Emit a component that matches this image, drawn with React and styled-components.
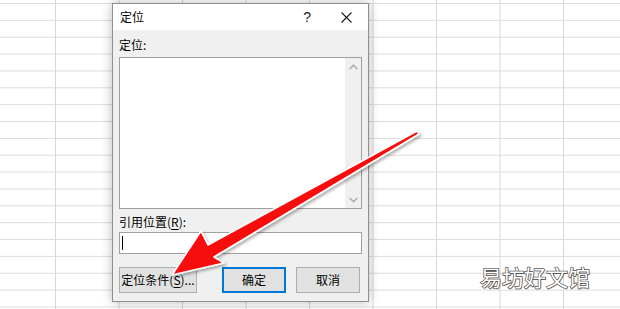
// Imports
import React from "react";
import styled, { createGlobalStyle } from "styled-components";

// Global
const GlobalStyle = createGlobalStyle`
	html, body{
		margin: 0;
		padding: 0;
		background: #ffffff;
	}
	body{
		font-family: "Noto Sans CJK SC", "Noto Sans", sans-serif;
	}
`;

// Icons
const CloseIcon = () => (
	<svg width="11" height="11" viewBox="0 0 11 11">
		<path d="M0.5 0.5 L10.5 10.5 M10.5 0.5 L0.5 10.5" stroke="#1a1a1a" strokeWidth="1.1" fill="none" />
	</svg>
);

const Chevron = ({ down }) => (
	<svg width="9" height="6" viewBox="0 0 9 6">
		<path d={ down ? "M0.8 1 L4.5 4.8 L8.2 1" : "M0.8 5 L4.5 1.2 L8.2 5" }
			stroke="#a6a6a6" strokeWidth="1.3" fill="none" />
	</svg>
);

const RedArrow = () => (
	<ArrowLayer width="620" height="309" viewBox="0 0 620 309">
		<defs>
			<filter id="arrowShadow" x="-10%" y="-10%" width="130%" height="130%">
				<feDropShadow dx="1.5" dy="2" stdDeviation="1.6" floodColor="#000" floodOpacity="0.32" />
			</filter>
			<linearGradient id="arrowFill" x1="0" y1="0" x2="1" y2="1">
				<stop offset="0" stopColor="#ff1a1a" />
				<stop offset="1" stopColor="#f00000" />
			</linearGradient>
		</defs>
		<polygon
			points="417,131 419,134 214,257 224,263 172,275 201,231 208,245"
			fill="url(#arrowFill)" stroke="#ffffff" strokeWidth="1.6" strokeLinejoin="round"
			filter="url(#arrowShadow)" />
	</ArrowLayer>
);

// Component
const App = () => {

	// Return
	return(
		<>
			<GlobalStyle />
			<Screen>
				<Dialog>
					<TitleBar>
						<Title>定位</Title>
						<TitleButtons>
							<Help>?</Help>
							<CloseIcon />
						</TitleButtons>
					</TitleBar>
					<Body>
						<FieldLabel>定位:</FieldLabel>
						<ListBox>
							<ListArea />
							<ScrollBar>
								<Chevron />
								<Chevron down />
							</ScrollBar>
						</ListBox>
						<FieldLabel $gap={ 5 }>引用位置(<u>R</u>):</FieldLabel>
						<RefInput>
							<Caret />
						</RefInput>
						<ButtonRow>
							<Button $width={ 78 }>定位条件(<u>S</u>)...</Button>
							<Button $width={ 64 } $primary>确定</Button>
							<Button $width={ 64 }>取消</Button>
						</ButtonRow>
					</Body>
				</Dialog>
				<RedArrow />
				<Watermark>易坊好文馆</Watermark>
			</Screen>
		</>
	);

};

// Styled
const Screen = styled.div`
	position: relative;
	width: 620px;
	height: 309px;
	overflow: hidden;
	background-color: #ffffff;
	background-image:
		linear-gradient(to right, #d6d6d6 1px, transparent 1px),
		linear-gradient(to bottom, #dcdcdc 1px, transparent 1px);
	background-size: 63.5px 100%, 100% 16.87px;
	background-position: 55px 0, 0 3px;
`;

const Dialog = styled.div`
	position: absolute;
	left: 112px;
	top: 3px;
	width: 257px;
	height: 299px;
	box-sizing: border-box;
	border: 1px solid #8f8f8f;
	background: #f0f0f0;
	box-shadow: 0 0 10px rgba(0, 0, 0, 0.28);
	display: flex;
	flex-direction: column;
	font-size: 12px;
	color: #000;
`;

const TitleBar = styled.div`
	height: 26px;
	background: #ffffff;
	display: flex;
	align-items: center;
	justify-content: space-between;
	padding: 0 16px 0 7px;
`;

const Title = styled.span`
	font-size: 12px;
	line-height: 16px;
`;

const TitleButtons = styled.div`
	display: flex;
	align-items: center;
	gap: 30px;
`;

const Help = styled.span`
	font-family: "Liberation Sans", sans-serif;
	font-size: 14px;
	line-height: 16px;
	color: #222;
`;

const Body = styled.div`
	flex: 1;
	display: flex;
	flex-direction: column;
	padding: 7px 6px 0 6px;
`;

const FieldLabel = styled.div`
	font-size: 12px;
	line-height: 16px;
	margin-top: ${ props => props.$gap || 0 }px;
	u{
		text-underline-offset: 2px;
	}
`;

const ListBox = styled.div`
	margin-top: 4px;
	height: 152px;
	box-sizing: border-box;
	border: 1px solid #a0a0a0;
	background: #ffffff;
	display: flex;
`;

const ListArea = styled.div`
	flex: 1;
`;

const ScrollBar = styled.div`
	width: 16px;
	background: #f0f0f0;
	display: flex;
	flex-direction: column;
	align-items: center;
	justify-content: space-between;
	padding: 6px 0 5px;
`;

const RefInput = styled.div`
	margin-top: 2px;
	height: 22px;
	box-sizing: border-box;
	border: 1px solid #a0a0a0;
	background: #ffffff;
	display: flex;
	align-items: center;
	padding-left: 2px;
`;

const Caret = styled.div`
	width: 1px;
	height: 14px;
	background: #000;
`;

const ButtonRow = styled.div`
	margin-top: 13px;
	display: flex;
	gap: 10px;
	padding-right: 2px;
	& > :nth-child(2){
		margin-left: auto;
	}
`;

const Button = styled.div`
	width: ${ props => props.$width }px;
	height: 26px;
	box-sizing: border-box;
	background: #e1e1e1;
	border: 1px solid ${ props => props.$primary ? "#0078d7" : "#adadad" };
	box-shadow: ${ props => props.$primary ? "inset 0 0 0 1px #0078d7" : "none" };
	display: flex;
	align-items: center;
	justify-content: center;
	font-size: 12px;
	line-height: 16px;
	u{
		text-underline-offset: 2px;
	}
`;

const ArrowLayer = styled.svg`
	position: absolute;
	left: 0;
	top: 0;
	pointer-events: none;
`;

const Watermark = styled.div`
	position: absolute;
	left: 480px;
	top: 263px;
	font-size: 22px;
	line-height: 26px;
	color: #ffffff;
	-webkit-text-stroke: 1.4px #555555;
	paint-order: stroke fill;
	text-shadow: 1px 1px 1px rgba(0, 0, 0, 0.25);
	font-family: "Noto Sans CJK SC", sans-serif;
`;

// Export
export default App;
